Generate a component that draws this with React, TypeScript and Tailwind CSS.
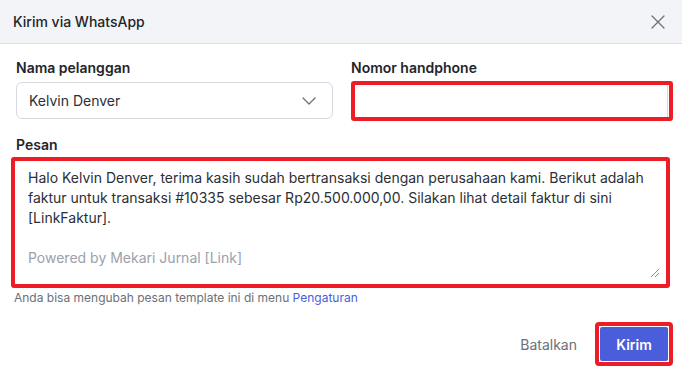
import React from "react";

export default function App() {
  return (
    <div className="w-[682px] h-[380px] bg-white overflow-hidden text-[#2b2f36]" style={{ fontFamily: "Inter, 'Noto Sans', sans-serif" }}>
      <div className="h-[44px] bg-[#f3f4f7] border-b border-[#dcdfe4] flex items-center justify-between pl-[13px] pr-[17px]">
        <div className="text-[14px] font-medium text-[#22252a]">Kirim via WhatsApp</div>
        <svg width="14" height="14" viewBox="0 0 14 14" className="text-[#6b7079]">
          <path d="M1 1L13 13M13 1L1 13" stroke="currentColor" strokeWidth="1.3" strokeLinecap="round" />
        </svg>
      </div>

      <div className="flex items-start gap-[18px] pl-4 mt-[14px]">
        <div className="w-[317px] flex flex-col">
          <div className="text-[14px] leading-5 font-semibold text-[#22252a] mb-[4px]">Nama pelanggan</div>
          <div className="h-[37px] border border-[#d5d8de] rounded-[6px] flex items-center justify-between pl-[12px] pr-[16px]">
            <span className="text-[14px] text-[#2b2f36]">Kelvin Denver</span>
            <svg width="14" height="8" viewBox="0 0 14 8" className="text-[#6b7079]">
              <path d="M1 1L7 7L13 1" fill="none" stroke="currentColor" strokeWidth="1.3" strokeLinecap="round" strokeLinejoin="round" />
            </svg>
          </div>
        </div>
        <div className="w-[322px] flex flex-col">
          <div className="text-[14px] leading-5 font-semibold text-[#22252a] mb-[3px]">Nomor handphone</div>
          <div className="h-[40px] border-4 border-[#ee1c25] rounded-[3px] bg-white">
            <div className="h-full border-r border-[#d5d8de] mr-[1px]" />
          </div>
        </div>
      </div>

      <div className="pl-4 mt-[14px] text-[14px] leading-5 font-semibold text-[#22252a]">Pesan</div>
      <div className="ml-[11px] mt-[2px] w-[659px] h-[131px] border-4 border-[#ee1c25] rounded-[3px] relative pl-[13px] pt-[7px]">
        <div className="text-[14px] leading-5 text-[#2b2f36] whitespace-nowrap">
          Halo Kelvin Denver, terima kasih sudah bertransaksi dengan perusahaan kami. Berikut adalah
          <br />
          faktur untuk transaksi #10335 sebesar Rp20.500.000,00. Silakan lihat detail faktur di sini
          <br />
          [LinkFaktur].
          <br />
          <br />
          <span className="text-[#9ba1ab]">Powered by Mekari Jurnal [Link]</span>
        </div>
        <svg width="10" height="10" viewBox="0 0 10 10" className="absolute right-[6px] bottom-[6px] text-[#8a8f98]">
          <path d="M9 1L1 9M9 5L5 9" stroke="currentColor" strokeWidth="1" />
        </svg>
      </div>
      <div className="ml-[14px] mt-[2px] text-[12px] leading-4 text-[#6b7079]">
        Anda bisa mengubah pesan template ini di menu <span className="text-[#4a5ddb]">Pengaturan</span>
      </div>

      <div className="flex justify-end items-center gap-[18px] pr-[9px] mt-[16px]">
        <span className="text-[14px] text-[#6b7079]">Batalkan</span>
        <div className="w-[78px] h-[44px] border-4 border-[#ee1c25] rounded-[4px] p-px bg-white">
          <div className="w-full h-full bg-[#4a5ddb] rounded-[2px] flex items-center justify-center text-white text-[14px] font-semibold">
            Kirim
          </div>
        </div>
      </div>
    </div>
  );
}
